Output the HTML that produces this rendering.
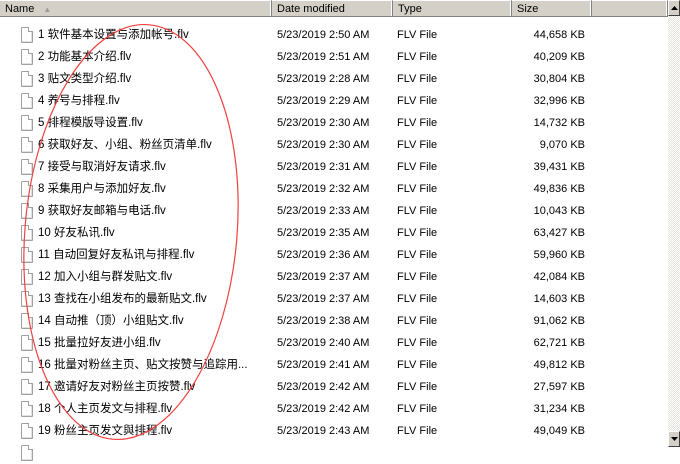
<!DOCTYPE html>
<html><head><meta charset="utf-8"><style>
*{margin:0;padding:0;box-sizing:border-box}
body{width:680px;height:447px;overflow:hidden;background:#fff;position:relative;font-family:"Liberation Sans","Noto Sans CJK SC",sans-serif;font-size:11px;color:#000}
.hdr{position:absolute;top:0;left:0;width:668px;height:17px;background:#d4d0c8;border-bottom:1px solid #808080}
.hc{position:absolute;top:0;height:16px;line-height:16px;padding-left:5px;border-right:1px solid #808080;box-shadow:inset -1px 0 0 #fff;border-top:1px solid #fff}
.row{position:absolute;left:0;width:668px;height:22px;line-height:22px;white-space:nowrap}
.ic{position:absolute;left:21px;top:3px;width:12px;height:16px;background:#fff;border:1px solid #a0a0a0;border-radius:1px;box-shadow:inset -1px -1px 0 #e0e0e0}
.ic:after{content:"";position:absolute;right:-1px;top:-1px;width:4px;height:4px;background:#fff;border-left:1px solid #a0a0a0;border-bottom:1px solid #a0a0a0}
.nm{position:absolute;left:38px;font-size:11.5px}
.dt{position:absolute;left:277px}
.ty{position:absolute;left:397px}
.sz{position:absolute;right:83px}
.sb{position:absolute;left:668px;top:0;width:12px;height:447px;background-color:#eee;background-image:repeating-conic-gradient(#e4e2dc 0 25%,#fff 0 50%);background-size:2px 2px}
.btn{position:absolute;left:668px;width:12px;height:16px;background:#d4d0c8;border:1px solid;border-color:#fff #404040 #404040 #fff}
</style></head><body>
<div class="hdr">
<div class="hc" style="left:0;width:272px">Name <span style="color:#999;font-size:8px;margin-left:6px">▲</span></div>
<div class="hc" style="left:272px;width:121px">Date modified</div>
<div class="hc" style="left:393px;width:119px">Type</div>
<div class="hc" style="left:512px;width:80px">Size</div>
<div class="hc" style="left:592px;width:76px"></div>
</div>
<div class="row" style="top:24px"><div class="ic"></div><span class="nm">1 软件基本设置与添加帐号.flv</span><span class="dt">5/23/2019 2:50 AM</span><span class="ty">FLV File</span><span class="sz">44,658 KB</span></div>
<div class="row" style="top:46px"><div class="ic"></div><span class="nm">2 功能基本介绍.flv</span><span class="dt">5/23/2019 2:51 AM</span><span class="ty">FLV File</span><span class="sz">40,209 KB</span></div>
<div class="row" style="top:68px"><div class="ic"></div><span class="nm">3 贴文类型介绍.flv</span><span class="dt">5/23/2019 2:28 AM</span><span class="ty">FLV File</span><span class="sz">30,804 KB</span></div>
<div class="row" style="top:90px"><div class="ic"></div><span class="nm">4 养号与排程.flv</span><span class="dt">5/23/2019 2:29 AM</span><span class="ty">FLV File</span><span class="sz">32,996 KB</span></div>
<div class="row" style="top:112px"><div class="ic"></div><span class="nm">5 排程模版导设置.flv</span><span class="dt">5/23/2019 2:30 AM</span><span class="ty">FLV File</span><span class="sz">14,732 KB</span></div>
<div class="row" style="top:134px"><div class="ic"></div><span class="nm">6 获取好友、小组、粉丝页清单.flv</span><span class="dt">5/23/2019 2:30 AM</span><span class="ty">FLV File</span><span class="sz">9,070 KB</span></div>
<div class="row" style="top:156px"><div class="ic"></div><span class="nm">7 接受与取消好友请求.flv</span><span class="dt">5/23/2019 2:31 AM</span><span class="ty">FLV File</span><span class="sz">39,431 KB</span></div>
<div class="row" style="top:178px"><div class="ic"></div><span class="nm">8 采集用户与添加好友.flv</span><span class="dt">5/23/2019 2:32 AM</span><span class="ty">FLV File</span><span class="sz">49,836 KB</span></div>
<div class="row" style="top:200px"><div class="ic"></div><span class="nm">9 获取好友邮箱与电话.flv</span><span class="dt">5/23/2019 2:33 AM</span><span class="ty">FLV File</span><span class="sz">10,043 KB</span></div>
<div class="row" style="top:222px"><div class="ic"></div><span class="nm">10 好友私讯.flv</span><span class="dt">5/23/2019 2:35 AM</span><span class="ty">FLV File</span><span class="sz">63,427 KB</span></div>
<div class="row" style="top:244px"><div class="ic"></div><span class="nm">11 自动回复好友私讯与排程.flv</span><span class="dt">5/23/2019 2:36 AM</span><span class="ty">FLV File</span><span class="sz">59,960 KB</span></div>
<div class="row" style="top:266px"><div class="ic"></div><span class="nm">12 加入小组与群发贴文.flv</span><span class="dt">5/23/2019 2:37 AM</span><span class="ty">FLV File</span><span class="sz">42,084 KB</span></div>
<div class="row" style="top:288px"><div class="ic"></div><span class="nm">13 查找在小组发布的最新贴文.flv</span><span class="dt">5/23/2019 2:37 AM</span><span class="ty">FLV File</span><span class="sz">14,603 KB</span></div>
<div class="row" style="top:310px"><div class="ic"></div><span class="nm">14 自动推（顶）小组贴文.flv</span><span class="dt">5/23/2019 2:38 AM</span><span class="ty">FLV File</span><span class="sz">91,062 KB</span></div>
<div class="row" style="top:332px"><div class="ic"></div><span class="nm">15 批量拉好友进小组.flv</span><span class="dt">5/23/2019 2:40 AM</span><span class="ty">FLV File</span><span class="sz">62,721 KB</span></div>
<div class="row" style="top:354px"><div class="ic"></div><span class="nm">16 批量对粉丝主页、贴文按赞与追踪用...</span><span class="dt">5/23/2019 2:41 AM</span><span class="ty">FLV File</span><span class="sz">49,812 KB</span></div>
<div class="row" style="top:376px"><div class="ic"></div><span class="nm">17 邀请好友对粉丝主页按赞.flv</span><span class="dt">5/23/2019 2:42 AM</span><span class="ty">FLV File</span><span class="sz">27,597 KB</span></div>
<div class="row" style="top:398px"><div class="ic"></div><span class="nm">18 个人主页发文与排程.flv</span><span class="dt">5/23/2019 2:42 AM</span><span class="ty">FLV File</span><span class="sz">31,234 KB</span></div>
<div class="row" style="top:420px"><div class="ic"></div><span class="nm">19 粉丝主页发文與排程.flv</span><span class="dt">5/23/2019 2:43 AM</span><span class="ty">FLV File</span><span class="sz">49,049 KB</span></div>
<div class="row" style="top:442px"><div class="ic"></div></div>
<div class="sb"></div>
<div class="btn" style="top:0"><svg width="10" height="14" style="position:absolute;left:0;top:0"><path d="M2 9h7L5.5 5z" fill="#000"/></svg></div>
<div class="btn" style="top:431px"><svg width="10" height="14" style="position:absolute;left:0;top:0"><path d="M2 5h7L5.5 9z" fill="#000"/></svg></div>
<svg width="680" height="447" style="position:absolute;left:0;top:0;pointer-events:none"><ellipse cx="131" cy="232" rx="106" ry="208" transform="rotate(5 131 232)" fill="none" stroke="#f04040" stroke-width="1.2"/></svg>
</body></html>
